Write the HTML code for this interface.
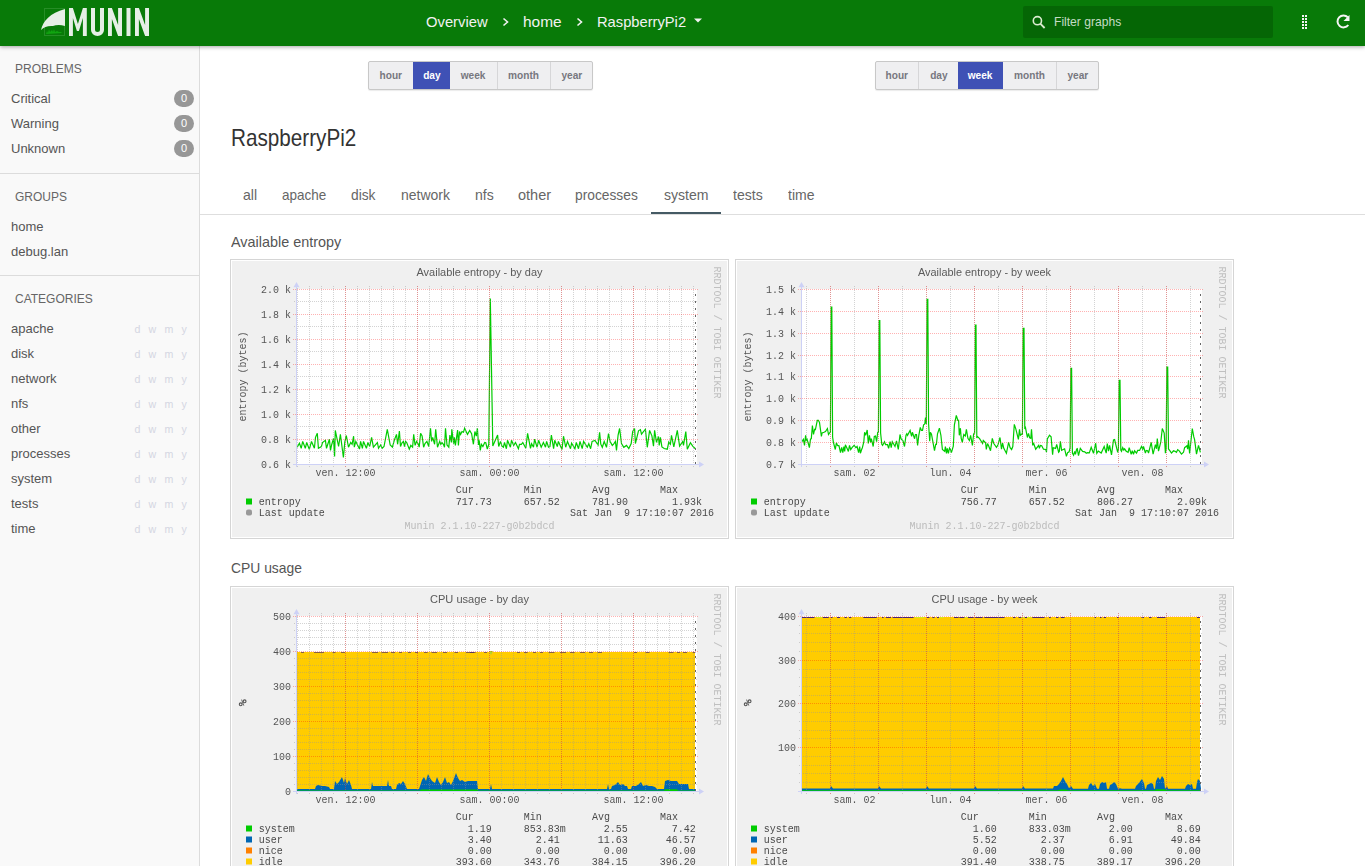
<!DOCTYPE html>
<html><head><meta charset="utf-8"><title>Munin :: RaspberryPi2</title>
<style>
*{margin:0;padding:0;box-sizing:border-box}
html,body{width:1365px;height:866px;overflow:hidden;background:#fff;font-family:"Liberation Sans",sans-serif}
.abs{position:absolute;white-space:nowrap}
#hdr{position:absolute;left:0;top:0;width:1365px;height:46px;background:#087a08;box-shadow:0 1px 4px rgba(0,0,0,.35);z-index:5}
#side{position:absolute;left:0;top:46px;width:200px;height:820px;background:#f9f9f9;border-right:1px solid #dcdcdc}
.sh{position:absolute;left:15px;font-size:12px;color:#666;letter-spacing:0}
.si{position:absolute;left:11px;font-size:13px;color:#555}
.badge{position:absolute;left:174px;width:20px;height:17px;border-radius:9px;background:#979797;color:#fff;font-size:11px;text-align:center;line-height:17px}
.hr{position:absolute;left:0;width:200px;height:1px;background:#dcdcdc}
.dwmy{position:absolute;margin-left:-1.5px;font-size:10.6px;margin-top:-0.5px;color:#d4d6e2}
.btng{position:absolute;top:61px;height:29px;border:1px solid #c8c8c8;border-radius:2px;background:#efeff1;box-shadow:0 1px 1px rgba(0,0,0,.08)}
.btn{position:absolute;top:0;height:27px;line-height:27px;font-size:11.5px;font-weight:bold;color:#77777f;text-align:center}
.btn.b{border-left:1px solid #d6d6d8}
.btn.act{background:#3f51b5;color:#fff}
.btn span{display:inline-block;transform:scaleX(.88)}
.tab{position:absolute;top:187px;transform-origin:0 0;font-size:14.5px;color:#666}
.gbox{position:absolute;will-change:transform}
</style></head><body>
<div id="hdr">
  <svg class="abs" style="left:40px;top:7px" width="112" height="32" viewBox="0 0 112 32">
    <rect x="4.5" y="1.5" width="20" height="27" fill="none" stroke="#3a9a3a" stroke-width="1" opacity=".6"/>
    <path d="M1,23 C3,14 10,6 25,2 L25,19 C20,17.5 16,18 13,19 C8,18.5 4,20 1,23 Z" fill="#e6efe6"/>
    <path d="M6,27 l1,-3 l1,2 l1,-4 l1,3 l2,-2 l1,2 l1,-3 l1,3 l2,-1 l2,1 l2,0 l1,1 Z" fill="#13b013" opacity=".8"/>
    <g fill="#e6efe6">
      <path d="M29,1 h3.9 l5,16 l5,-16 h3.9 v28 h-3.9 v-18 l-4,13 h-2 l-4,-13 v18 h-3.9 Z"/>
      <path d="M51,1 h4 v21.5 a2.5,2.5 0 0 0 5,0 v-21.5 h4 v22 a6.5,6 0 0 1 -13,0 Z"/>
      <path d="M68,1 h3.9 l6.2,17 v-17 h3.9 v28 h-3.9 l-6.2,-17 v17 h-3.9 Z"/>
      <rect x="86.5" y="1" width="4" height="28"/>
      <path d="M95,1 h3.9 l6.2,17 v-17 h3.9 v28 h-3.9 l-6.2,-17 v17 h-3.9 Z"/>
    </g>
  </svg>
  <div class="abs" style="left:426px;top:13px;font-size:15px;color:#f2f2f2;transform:scaleX(.985);transform-origin:0 0">Overview</div>
  <svg class="abs" style="left:502px;top:17px" width="8" height="10"><path d="M1.5,1.5 L5.5,5 L1.5,8.5" fill="none" stroke="#f2f2f2" stroke-width="1.6"/></svg>
  <div class="abs" style="left:523px;top:13px;font-size:15px;color:#f2f2f2;transform:scaleX(1.03);transform-origin:0 0">home</div>
  <svg class="abs" style="left:576px;top:17px" width="8" height="10"><path d="M1.5,1.5 L5.5,5 L1.5,8.5" fill="none" stroke="#f2f2f2" stroke-width="1.6"/></svg>
  <div class="abs" style="left:597px;top:13px;font-size:15px;color:#f2f2f2;transform:scaleX(.98);transform-origin:0 0">RaspberryPi2</div>
  <svg class="abs" style="left:693px;top:18px" width="10" height="6"><path d="M1,0.5 L9,0.5 L5,4.5 Z" fill="#f2f2f2"/></svg>
  <div class="abs" style="left:1023px;top:6px;width:250px;height:32px;background:#056605;border-radius:2px"></div>
  <svg class="abs" style="left:1030px;top:14px" width="18" height="18"><circle cx="7.4" cy="6.7" r="4.1" fill="none" stroke="#dcebd0" stroke-width="1.6"/><path d="M10.3,9.7 L14.6,14" stroke="#dcebd0" stroke-width="1.8" stroke-linecap="butt"/></svg>
  <div class="abs" style="left:1054px;top:14px;font-size:13px;color:#c4dcc4;transform:scaleX(.93);transform-origin:0 0">Filter graphs</div>
  <svg class="abs" style="left:1300px;top:13px" width="10" height="18" fill="#f5f5f5">
    <rect x="2" y="2" width="2" height="2"/><rect x="5" y="2" width="2" height="2"/>
    <rect x="2" y="5" width="2" height="2"/><rect x="5" y="5" width="2" height="2"/>
    <rect x="2" y="8" width="2" height="2"/><rect x="5" y="8" width="2" height="2"/>
    <rect x="2" y="11" width="2" height="2"/><rect x="5" y="11" width="2" height="2"/>
    <rect x="2" y="14" width="2" height="2"/><rect x="5" y="14" width="2" height="2"/>
  </svg>
  <svg class="abs" style="left:1333px;top:12px" width="20" height="20"><path d="M14.8,5.2 A6,6 0 1 0 15.3,13" fill="none" stroke="#f5f5f5" stroke-width="2"/><path d="M16.5,3 L16.5,9 L10.5,9 Z" fill="#f5f5f5"/></svg>
</div>

<div id="side">
  <div class="sh" style="top:16px">PROBLEMS</div>
  <div class="si" style="top:45px">Critical</div><div class="badge" style="top:44px">0</div>
  <div class="si" style="top:70px">Warning</div><div class="badge" style="top:69px">0</div>
  <div class="si" style="top:95px">Unknown</div><div class="badge" style="top:94px">0</div>
  <div class="hr" style="top:127px"></div>
  <div class="sh" style="top:144px">GROUPS</div>
  <div class="si" style="top:173px">home</div>
  <div class="si" style="top:198px">debug.lan</div>
  <div class="hr" style="top:229px"></div>
  <div class="sh" style="top:246px">CATEGORIES</div>
  <div class="si" style="top:275px">apache</div><div class="dwmy" style="left:136px;top:277px">d</div><div class="dwmy" style="left:150px;top:277px">w</div><div class="dwmy" style="left:166px;top:277px">m</div><div class="dwmy" style="left:183px;top:277px">y</div><div class="si" style="top:300px">disk</div><div class="dwmy" style="left:136px;top:302px">d</div><div class="dwmy" style="left:150px;top:302px">w</div><div class="dwmy" style="left:166px;top:302px">m</div><div class="dwmy" style="left:183px;top:302px">y</div><div class="si" style="top:325px">network</div><div class="dwmy" style="left:136px;top:327px">d</div><div class="dwmy" style="left:150px;top:327px">w</div><div class="dwmy" style="left:166px;top:327px">m</div><div class="dwmy" style="left:183px;top:327px">y</div><div class="si" style="top:350px">nfs</div><div class="dwmy" style="left:136px;top:352px">d</div><div class="dwmy" style="left:150px;top:352px">w</div><div class="dwmy" style="left:166px;top:352px">m</div><div class="dwmy" style="left:183px;top:352px">y</div><div class="si" style="top:375px">other</div><div class="dwmy" style="left:136px;top:377px">d</div><div class="dwmy" style="left:150px;top:377px">w</div><div class="dwmy" style="left:166px;top:377px">m</div><div class="dwmy" style="left:183px;top:377px">y</div><div class="si" style="top:400px">processes</div><div class="dwmy" style="left:136px;top:402px">d</div><div class="dwmy" style="left:150px;top:402px">w</div><div class="dwmy" style="left:166px;top:402px">m</div><div class="dwmy" style="left:183px;top:402px">y</div><div class="si" style="top:425px">system</div><div class="dwmy" style="left:136px;top:427px">d</div><div class="dwmy" style="left:150px;top:427px">w</div><div class="dwmy" style="left:166px;top:427px">m</div><div class="dwmy" style="left:183px;top:427px">y</div><div class="si" style="top:450px">tests</div><div class="dwmy" style="left:136px;top:452px">d</div><div class="dwmy" style="left:150px;top:452px">w</div><div class="dwmy" style="left:166px;top:452px">m</div><div class="dwmy" style="left:183px;top:452px">y</div><div class="si" style="top:475px">time</div><div class="dwmy" style="left:136px;top:477px">d</div><div class="dwmy" style="left:150px;top:477px">w</div><div class="dwmy" style="left:166px;top:477px">m</div><div class="dwmy" style="left:183px;top:477px">y</div>
</div>

<div class="btng" style="left:368px;width:225px">
  <div class="btn" style="left:0;width:44px"><span>hour</span></div>
  <div class="btn act" style="left:44px;width:37px"><span>day</span></div>
  <div class="btn" style="left:81px;width:47px"><span>week</span></div>
  <div class="btn b" style="left:128px;width:53px"><span>month</span></div>
  <div class="btn b" style="left:181px;width:42px"><span>year</span></div>
</div>
<div class="btng" style="left:875px;width:224px">
  <div class="btn" style="left:0;width:42px"><span>hour</span></div>
  <div class="btn b" style="left:42px;width:40px"><span>day</span></div>
  <div class="btn act" style="left:82px;width:45px"><span>week</span></div>
  <div class="btn" style="left:127px;width:53px"><span>month</span></div>
  <div class="btn b" style="left:180px;width:42px"><span>year</span></div>
</div>

<div class="abs" style="left:231px;top:124px;font-size:24px;color:#333;transform:scaleX(.862);transform-origin:0 0">RaspberryPi2</div>

<div class="tab" style="left:243px;transform:scaleX(0.97)">all</div>
<div class="tab" style="left:282px;transform:scaleX(0.93)">apache</div>
<div class="tab" style="left:351px;transform:scaleX(0.95)">disk</div>
<div class="tab" style="left:401px;transform:scaleX(0.965)">network</div>
<div class="tab" style="left:475px;transform:scaleX(0.97)">nfs</div>
<div class="tab" style="left:518px;transform:scaleX(1)">other</div>
<div class="tab" style="left:575px;transform:scaleX(0.95)">processes</div>
<div class="tab" style="left:664px;transform:scaleX(0.97)">system</div>
<div class="tab" style="left:733px;transform:scaleX(0.97)">tests</div>
<div class="tab" style="left:788px;transform:scaleX(0.967)">time</div>
<div class="abs" style="left:651px;top:212px;width:70px;height:2px;background:#455a64"></div>
<div class="abs" style="left:200px;top:214px;width:1165px;height:1px;background:#dedede"></div>

<div class="abs" style="left:231px;top:233px;font-size:15px;color:#555;transform:scaleX(.96);transform-origin:0 0">Available entropy</div>
<div class="gbox" style="left:230px;top:259px"><svg width="499" height="280" viewBox="0 0 499 280" style="display:block" font-family='"Liberation Mono", monospace'><rect x="0" y="0" width="499" height="280" fill="#d5d5d5"/><rect x="1" y="1" width="497" height="278" fill="#fff"/><rect x="2" y="2" width="495" height="276" fill="#f0f0f0"/><rect x="67" y="30" width="400" height="175" fill="#fff"/><polyline points="67.2,188.2 69.4,184.2 71.2,189.3 72.7,182.4 75.3,189.3 76.7,183.5 79.3,190.4 81.5,182.4 84.4,189.3 85.5,178.3 87.3,174.3 88.4,189.3 91.4,187.5 92.5,183.5 95.4,181.3 96.5,189.3 99.4,180.2 100.5,191.5 101.6,186.0 103.5,179.4 104.6,197.4 105.3,171.4 108.6,187.5 110.4,175.4 113.4,198.5 114.8,183.1 116.3,176.5 118.5,188.2 120.7,183.5 122.1,185.3 123.6,177.2 124.3,188.2 125.8,182.4 129.5,190.1 130.6,182.4 132.4,189.3 133.5,182.4 136.4,189.3 137.9,183.5 139.7,187.5 141.6,178.3 143.4,188.2 147.4,183.5 148.5,189.3 150.7,186.0 152.2,189.3 154.0,187.5 157.3,170.3 160.2,186.0 162.4,188.2 164.3,181.3 166.5,175.4 167.6,185.3 169.4,172.1 170.5,187.5 172.0,183.8 173.4,182.4 174.5,187.5 175.6,182.4 176.7,183.5 179.3,190.1 180.8,186.4 182.6,188.2 183.7,175.4 185.1,186.4 186.6,182.4 188.4,185.3 189.2,188.2 190.6,174.3 192.1,176.9 193.6,188.2 195.0,184.6 196.9,182.4 198.7,187.5 200.5,169.2 201.6,182.4 202.7,178.3 204.6,185.3 205.7,170.3 207.5,188.2 209.7,182.4 210.8,185.3 211.9,183.5 213.4,185.3 214.5,188.2 215.5,169.2 217.0,186.0 218.8,188.2 219.9,176.1 221.4,183.5 221.8,170.3 223.6,184.6 224.3,178.3 225.4,186.4 227.6,171.0 228.4,186.4 229.5,172.5 230.6,175.4 232.0,172.5 233.5,173.2 234.6,169.2 237.5,175.4 239.7,171.4 241.6,174.7 243.4,185.3 244.9,172.5 246.3,177.2 247.4,169.2 248.5,186.0 249.2,181.3 250.3,191.5 251.4,185.3 252.9,187.5 254.7,183.5 255.8,183.8 257.3,190.1 258.8,185.3 260.3,39.5 262.8,187.0 267.6,176.1 268.7,187.5 270.5,182.4 272.0,187.1 273.4,188.2 274.5,183.5 276.4,189.7 277.5,181.3 280.4,188.2 281.5,181.3 283.7,186.4 285.5,183.5 288.4,189.7 289.5,185.3 291.4,185.3 292.8,183.5 295.8,189.3 297.6,174.3 300.5,189.3 301.6,184.6 303.5,188.2 304.6,180.2 307.1,188.2 308.6,181.3 311.2,188.2 313.4,183.5 315.5,188.2 316.6,182.4 318.5,188.2 319.9,187.5 321.4,176.1 323.6,189.7 324.7,181.3 327.3,187.5 328.4,182.4 332.0,190.4 333.5,177.2 335.7,188.2 337.5,182.4 340.5,189.7 341.6,184.2 344.9,189.7 346.3,183.5 348.5,189.7 350.0,182.4 352.2,189.7 353.6,182.4 357.3,188.2 358.8,184.6 360.6,189.7 362.1,182.4 365.0,181.4 368.1,186.0 369.6,173.3 370.8,185.2 372.3,188.3 374.2,182.5 376.5,188.3 378.5,174.5 380.0,182.2 382.3,186.4 383.8,184.8 385.4,182.5 386.5,191.4 388.1,176.0 389.6,169.5 391.5,184.5 393.8,188.3 396.5,186.4 398.8,189.5 401.2,184.5 402.7,172.5 404.6,169.5 405.4,184.5 408.5,171.8 410.4,170.6 411.5,175.2 415.4,170.2 417.3,188.3 419.6,171.4 421.9,176.8 423.5,187.2 424.6,171.4 426.5,183.3 428.5,177.5 429.2,186.4 430.4,178.3 431.9,187.9 434.2,189.5 437.3,190.2 438.8,182.9 440.4,185.2 441.5,176.4 443.8,187.9 447.3,171.4 449.6,187.2 452.7,182.5 453.5,186.4 455.8,172.5 457.3,190.2 460.4,183.7 462.7,187.2 465.4,189.8" fill="none" stroke="#00cc00" stroke-width="1.2" stroke-linejoin="miter" stroke-miterlimit="3"/><line x1="64" y1="192.5" x2="467" y2="192.5" stroke="rgba(150,150,150,0.42)" stroke-dasharray="1,1"/><line x1="64" y1="167.5" x2="467" y2="167.5" stroke="rgba(150,150,150,0.42)" stroke-dasharray="1,1"/><line x1="64" y1="142.5" x2="467" y2="142.5" stroke="rgba(150,150,150,0.42)" stroke-dasharray="1,1"/><line x1="64" y1="117.5" x2="467" y2="117.5" stroke="rgba(150,150,150,0.42)" stroke-dasharray="1,1"/><line x1="64" y1="92.5" x2="467" y2="92.5" stroke="rgba(150,150,150,0.42)" stroke-dasharray="1,1"/><line x1="64" y1="67.5" x2="467" y2="67.5" stroke="rgba(150,150,150,0.42)" stroke-dasharray="1,1"/><line x1="64" y1="42.5" x2="467" y2="42.5" stroke="rgba(150,150,150,0.42)" stroke-dasharray="1,1"/><line x1="67.5" y1="27" x2="67.5" y2="208" stroke="rgba(150,150,150,0.42)" stroke-dasharray="1,1"/><line x1="79.5" y1="27" x2="79.5" y2="208" stroke="rgba(150,150,150,0.42)" stroke-dasharray="1,1"/><line x1="91.5" y1="27" x2="91.5" y2="208" stroke="rgba(150,150,150,0.42)" stroke-dasharray="1,1"/><line x1="103.5" y1="27" x2="103.5" y2="208" stroke="rgba(150,150,150,0.42)" stroke-dasharray="1,1"/><line x1="115.5" y1="27" x2="115.5" y2="208" stroke="rgba(150,150,150,0.42)" stroke-dasharray="1,1"/><line x1="127.5" y1="27" x2="127.5" y2="208" stroke="rgba(150,150,150,0.42)" stroke-dasharray="1,1"/><line x1="139.5" y1="27" x2="139.5" y2="208" stroke="rgba(150,150,150,0.42)" stroke-dasharray="1,1"/><line x1="151.5" y1="27" x2="151.5" y2="208" stroke="rgba(150,150,150,0.42)" stroke-dasharray="1,1"/><line x1="163.5" y1="27" x2="163.5" y2="208" stroke="rgba(150,150,150,0.42)" stroke-dasharray="1,1"/><line x1="175.5" y1="27" x2="175.5" y2="208" stroke="rgba(150,150,150,0.42)" stroke-dasharray="1,1"/><line x1="187.5" y1="27" x2="187.5" y2="208" stroke="rgba(150,150,150,0.42)" stroke-dasharray="1,1"/><line x1="199.5" y1="27" x2="199.5" y2="208" stroke="rgba(150,150,150,0.42)" stroke-dasharray="1,1"/><line x1="211.5" y1="27" x2="211.5" y2="208" stroke="rgba(150,150,150,0.42)" stroke-dasharray="1,1"/><line x1="223.5" y1="27" x2="223.5" y2="208" stroke="rgba(150,150,150,0.42)" stroke-dasharray="1,1"/><line x1="235.5" y1="27" x2="235.5" y2="208" stroke="rgba(150,150,150,0.42)" stroke-dasharray="1,1"/><line x1="247.5" y1="27" x2="247.5" y2="208" stroke="rgba(150,150,150,0.42)" stroke-dasharray="1,1"/><line x1="259.5" y1="27" x2="259.5" y2="208" stroke="rgba(150,150,150,0.42)" stroke-dasharray="1,1"/><line x1="271.5" y1="27" x2="271.5" y2="208" stroke="rgba(150,150,150,0.42)" stroke-dasharray="1,1"/><line x1="283.5" y1="27" x2="283.5" y2="208" stroke="rgba(150,150,150,0.42)" stroke-dasharray="1,1"/><line x1="295.5" y1="27" x2="295.5" y2="208" stroke="rgba(150,150,150,0.42)" stroke-dasharray="1,1"/><line x1="307.5" y1="27" x2="307.5" y2="208" stroke="rgba(150,150,150,0.42)" stroke-dasharray="1,1"/><line x1="319.5" y1="27" x2="319.5" y2="208" stroke="rgba(150,150,150,0.42)" stroke-dasharray="1,1"/><line x1="331.5" y1="27" x2="331.5" y2="208" stroke="rgba(150,150,150,0.42)" stroke-dasharray="1,1"/><line x1="343.5" y1="27" x2="343.5" y2="208" stroke="rgba(150,150,150,0.42)" stroke-dasharray="1,1"/><line x1="355.5" y1="27" x2="355.5" y2="208" stroke="rgba(150,150,150,0.42)" stroke-dasharray="1,1"/><line x1="367.5" y1="27" x2="367.5" y2="208" stroke="rgba(150,150,150,0.42)" stroke-dasharray="1,1"/><line x1="379.5" y1="27" x2="379.5" y2="208" stroke="rgba(150,150,150,0.42)" stroke-dasharray="1,1"/><line x1="391.5" y1="27" x2="391.5" y2="208" stroke="rgba(150,150,150,0.42)" stroke-dasharray="1,1"/><line x1="403.5" y1="27" x2="403.5" y2="208" stroke="rgba(150,150,150,0.42)" stroke-dasharray="1,1"/><line x1="415.5" y1="27" x2="415.5" y2="208" stroke="rgba(150,150,150,0.42)" stroke-dasharray="1,1"/><line x1="427.5" y1="27" x2="427.5" y2="208" stroke="rgba(150,150,150,0.42)" stroke-dasharray="1,1"/><line x1="439.5" y1="27" x2="439.5" y2="208" stroke="rgba(150,150,150,0.42)" stroke-dasharray="1,1"/><line x1="451.5" y1="27" x2="451.5" y2="208" stroke="rgba(150,150,150,0.42)" stroke-dasharray="1,1"/><line x1="463.5" y1="27" x2="463.5" y2="208" stroke="rgba(150,150,150,0.42)" stroke-dasharray="1,1"/><line x1="115.5" y1="27" x2="115.5" y2="209" stroke="rgba(255,0,0,0.3)" stroke-dasharray="1,1"/><line x1="187.5" y1="27" x2="187.5" y2="209" stroke="rgba(255,0,0,0.3)" stroke-dasharray="1,1"/><line x1="259.5" y1="27" x2="259.5" y2="209" stroke="rgba(255,0,0,0.3)" stroke-dasharray="1,1"/><line x1="331.5" y1="27" x2="331.5" y2="209" stroke="rgba(255,0,0,0.3)" stroke-dasharray="1,1"/><line x1="403.5" y1="27" x2="403.5" y2="209" stroke="rgba(255,0,0,0.3)" stroke-dasharray="1,1"/><line x1="63" y1="205.5" x2="469" y2="205.5" stroke="rgba(255,0,0,0.3)" stroke-dasharray="1,1"/><line x1="63" y1="180.5" x2="469" y2="180.5" stroke="rgba(255,0,0,0.3)" stroke-dasharray="1,1"/><line x1="63" y1="155.5" x2="469" y2="155.5" stroke="rgba(255,0,0,0.3)" stroke-dasharray="1,1"/><line x1="63" y1="130.5" x2="469" y2="130.5" stroke="rgba(255,0,0,0.3)" stroke-dasharray="1,1"/><line x1="63" y1="105.5" x2="469" y2="105.5" stroke="rgba(255,0,0,0.3)" stroke-dasharray="1,1"/><line x1="63" y1="80.5" x2="469" y2="80.5" stroke="rgba(255,0,0,0.3)" stroke-dasharray="1,1"/><line x1="63" y1="55.5" x2="469" y2="55.5" stroke="rgba(255,0,0,0.3)" stroke-dasharray="1,1"/><line x1="63" y1="30.5" x2="469" y2="30.5" stroke="rgba(255,0,0,0.3)" stroke-dasharray="1,1"/><line x1="465.5" y1="35" x2="465.5" y2="205" stroke="#666" stroke-dasharray="2,5" stroke-width="1"/><line x1="66.5" y1="27" x2="66.5" y2="208" stroke="#cdd1f6"/><line x1="63" y1="205.5" x2="470" y2="205.5" stroke="#cdd1f6"/><path d="M63.5,28.2 L66.5,23.1 L69.5,28.2 Z" fill="#cdd1f6"/><path d="M469,202.5 L474,205.5 L469,208.5 Z" fill="#cdd1f6"/><text x="61" y="209" text-anchor="end" fill="#555" font-size="10" textLength="30" lengthAdjust="spacingAndGlyphs"  xml:space="preserve">0.6 k</text><text x="61" y="184" text-anchor="end" fill="#555" font-size="10" textLength="30" lengthAdjust="spacingAndGlyphs"  xml:space="preserve">0.8 k</text><text x="61" y="159" text-anchor="end" fill="#555" font-size="10" textLength="30" lengthAdjust="spacingAndGlyphs"  xml:space="preserve">1.0 k</text><text x="61" y="134" text-anchor="end" fill="#555" font-size="10" textLength="30" lengthAdjust="spacingAndGlyphs"  xml:space="preserve">1.2 k</text><text x="61" y="109" text-anchor="end" fill="#555" font-size="10" textLength="30" lengthAdjust="spacingAndGlyphs"  xml:space="preserve">1.4 k</text><text x="61" y="84" text-anchor="end" fill="#555" font-size="10" textLength="30" lengthAdjust="spacingAndGlyphs"  xml:space="preserve">1.6 k</text><text x="61" y="59" text-anchor="end" fill="#555" font-size="10" textLength="30" lengthAdjust="spacingAndGlyphs"  xml:space="preserve">1.8 k</text><text x="61" y="34" text-anchor="end" fill="#555" font-size="10" textLength="30" lengthAdjust="spacingAndGlyphs"  xml:space="preserve">2.0 k</text><text x="115.5" y="217" text-anchor="middle" fill="#555" font-size="10" textLength="60" lengthAdjust="spacingAndGlyphs"  xml:space="preserve">ven. 12:00</text><text x="259.5" y="217" text-anchor="middle" fill="#555" font-size="10" textLength="60" lengthAdjust="spacingAndGlyphs"  xml:space="preserve">sam. 00:00</text><text x="403.5" y="217" text-anchor="middle" fill="#555" font-size="10" textLength="60" lengthAdjust="spacingAndGlyphs"  xml:space="preserve">sam. 12:00</text><text x="249.5" y="17" text-anchor="middle" fill="#5a5a5a" font-family='"Liberation Sans", sans-serif' font-size="10.6" textLength="126" lengthAdjust="spacingAndGlyphs">Available entropy - by day</text><text transform="translate(16,117.5) rotate(-90)" text-anchor="middle" fill="#555" font-size="10" textLength="90" lengthAdjust="spacingAndGlyphs" xml:space="preserve">entropy (bytes)</text><text transform="translate(483.5,7.5) rotate(90)" fill="#c0c0c0" font-size="10" textLength="132" lengthAdjust="spacingAndGlyphs" xml:space="preserve">RRDTOOL / TOBI OETIKER</text><text x="225.8" y="234" text-anchor="start" fill="#4a4a4a" font-size="10" textLength="18" lengthAdjust="spacingAndGlyphs"  xml:space="preserve">Cur</text><text x="293.7" y="234" text-anchor="start" fill="#4a4a4a" font-size="10" textLength="18" lengthAdjust="spacingAndGlyphs"  xml:space="preserve">Min</text><text x="361.9" y="234" text-anchor="start" fill="#4a4a4a" font-size="10" textLength="18" lengthAdjust="spacingAndGlyphs"  xml:space="preserve">Avg</text><text x="430" y="234" text-anchor="start" fill="#4a4a4a" font-size="10" textLength="18" lengthAdjust="spacingAndGlyphs"  xml:space="preserve">Max</text><rect x="16" y="239.5" width="6" height="6" fill="#00cc00"/><text x="28.7" y="246" text-anchor="start" fill="#4a4a4a" font-size="10" textLength="42" lengthAdjust="spacingAndGlyphs"  xml:space="preserve">entropy</text><text x="225.8" y="246" text-anchor="start" fill="#4a4a4a" font-size="10" textLength="36" lengthAdjust="spacingAndGlyphs"  xml:space="preserve">717.73</text><text x="293.7" y="246" text-anchor="start" fill="#4a4a4a" font-size="10" textLength="36" lengthAdjust="spacingAndGlyphs"  xml:space="preserve">657.52</text><text x="361.9" y="246" text-anchor="start" fill="#4a4a4a" font-size="10" textLength="36" lengthAdjust="spacingAndGlyphs"  xml:space="preserve">781.90</text><text x="430" y="246" text-anchor="start" fill="#4a4a4a" font-size="10" textLength="42" lengthAdjust="spacingAndGlyphs"  xml:space="preserve">  1.93k</text><rect x="16" y="250.5" width="6" height="6" rx="2" fill="#999"/><text x="28.7" y="257" text-anchor="start" fill="#4a4a4a" font-size="10" textLength="66" lengthAdjust="spacingAndGlyphs"  xml:space="preserve">Last update</text><text x="340" y="257" text-anchor="start" fill="#4a4a4a" font-size="10" textLength="144" lengthAdjust="spacingAndGlyphs"  xml:space="preserve">Sat Jan  9 17:10:07 2016</text><text x="249.5" y="270" text-anchor="middle" fill="#bbb" font-size="10" textLength="150" lengthAdjust="spacingAndGlyphs"  xml:space="preserve">Munin 2.1.10-227-g0b2bdcd</text></svg></div>
<div class="gbox" style="left:735px;top:259px"><svg width="499" height="280" viewBox="0 0 499 280" style="display:block" font-family='"Liberation Mono", monospace'><rect x="0" y="0" width="499" height="280" fill="#d5d5d5"/><rect x="1" y="1" width="497" height="278" fill="#fff"/><rect x="2" y="2" width="495" height="276" fill="#f0f0f0"/><rect x="67" y="30" width="400" height="175" fill="#fff"/><polyline points="66.9,182.7 68.4,180.4 69.5,186.4 70.6,176.3 71.4,181.9 72.1,180.4 73.3,184.5 74.4,188.7 75.5,180.0 76.3,179.7 77.4,166.5 78.5,175.5 79.6,170.3 80.4,170.7 82.3,161.3 83.4,161.3 84.5,163.5 86.4,177.4 87.1,174.0 89.0,173.3 90.5,172.5 92.4,169.5 93.5,175.5 95.0,173.3 95.4,173.0 96.2,48.0 96.8,48.0 97.6,178.0 98.4,183.4 100.3,190.5 101.4,183.8 102.5,186.4 104.0,186.8 105.5,193.6 106.7,188.3 107.8,193.6 108.9,187.5 109.7,192.4 110.4,185.7 111.9,189.0 113.4,192.4 114.5,186.4 115.7,190.5 117.2,188.3 119.1,186.4 120.9,188.7 122.1,187.5 123.6,193.6 124.7,187.5 125.4,194.3 126.9,189.8 127.3,189.0 128.8,183.0 129.6,173.3 130.7,176.3 132.2,171.0 133.3,184.5 134.4,176.3 135.6,183.4 136.3,179.7 138.2,187.5 139.3,177.4 140.5,177.0 141.6,182.7 142.7,173.3 143.4,173.0 144.2,61.5 144.8,61.5 145.6,174.0 146.8,185.3 147.6,186.4 149.5,182.7 150.6,185.7 152.5,185.7 153.6,189.4 155.1,182.7 156.2,188.7 157.3,182.7 160.0,187.5 161.5,181.9 163.3,190.5 165.0,175.5 166.1,180.0 168.0,181.9 169.5,187.5 171.0,176.3 171.8,174.8 172.5,176.3 175.1,171.4 176.6,177.4 177.4,173.3 179.6,179.7 180.4,175.5 181.5,175.5 182.6,186.4 183.8,176.3 185.3,168.4 186.4,171.4 187.5,171.4 188.6,165.8 189.8,165.0 190.5,158.6 191.3,165.0 192.1,40.3 192.8,40.3 193.6,165.0 194.7,182.3 195.4,173.3 196.5,175.2 199.5,191.7 200.7,185.3 201.4,185.3 202.5,174.8 204.4,169.2 205.9,176.3 207.4,190.5 209.7,192.4 210.4,187.5 211.5,194.3 212.3,189.4 213.4,194.3 214.5,189.0 215.3,190.2 216.4,193.6 218.3,187.2 219.4,165.8 221.3,156.4 222.8,161.3 223.6,161.3 224.3,176.3 225.4,169.2 226.2,179.3 227.3,183.4 228.8,175.5 230.3,177.0 231.4,170.3 232.9,179.3 234.4,181.5 235.6,176.3 237.4,186.4 238.6,175.2 239.3,174.0 239.6,174.0 240.4,66.0 241.0,66.0 241.8,179.0 242.3,177.4 244.6,179.7 247.6,184.5 248.3,181.5 250.6,183.8 251.3,190.5 252.5,184.5 253.6,186.8 255.5,191.7 257.3,179.3 258.8,184.5 261.5,188.3 263.0,185.7 265.0,178.5 266.5,190.2 267.6,184.2 268.8,189.4 271.4,194.3 273.6,183.4 275.1,188.7 276.6,190.5 277.8,187.5 279.3,165.4 280.8,169.9 283.4,180.4 284.5,170.3 285.3,176.3 287.1,174.8 287.4,175.0 288.2,69.3 289.0,69.3 289.8,170.0 290.5,168.8 292.4,178.5 293.5,174.4 294.7,178.9 295.8,179.3 296.5,170.3 297.7,186.4 298.4,183.8 300.7,190.2 303.7,186.4 304.4,189.4 305.5,186.4 306.7,186.8 308.5,190.2 310.8,190.5 311.5,193.2 312.3,180.0 314.5,176.3 316.1,177.8 317.6,195.8 318.3,188.7 320.6,189.4 321.7,185.3 323.6,193.2 324.3,192.4 325.4,182.3 326.6,191.3 329.6,189.8 331.4,197.3 332.6,193.6 334.1,192.8 335.0,189.0 335.1,189.0 335.9,109.3 336.6,109.3 337.4,194.0 338.6,196.2 339.7,192.4 340.5,195.4 341.6,190.2 342.3,189.8 343.5,196.6 345.3,189.4 347.6,192.4 349.8,192.8 351.3,194.3 352.5,193.6 354.3,193.9 356.2,188.3 358.5,194.3 360.7,184.2 361.8,194.3 363.3,192.1 366.2,194.1 369.2,187.5 371.2,194.1 372.3,184.5 373.5,192.2 374.6,186.4 376.5,196.0 378.5,181.0 379.6,180.6 382.7,193.3 383.3,190.2 383.4,190.0 384.2,121.3 385.0,121.3 385.8,191.0 386.5,192.2 387.7,188.7 388.8,191.0 389.6,189.8 391.2,192.2 393.1,193.3 394.2,188.7 396.2,195.2 397.3,191.8 398.5,195.2 399.6,191.8 401.5,194.1 402.7,191.4 404.6,191.4 406.5,187.5 407.7,190.2 408.5,187.5 410.4,194.1 411.2,191.4 412.7,191.8 413.5,194.1 416.2,183.3 418.1,195.2 420.4,185.6 421.5,189.8 422.3,179.5 423.5,192.2 425.8,182.9 427.3,169.5 429.2,174.1 430.4,194.1 431.0,190.2 431.1,190.0 431.9,108.2 432.7,108.2 433.5,190.0 435.0,191.8 436.5,194.1 438.5,191.8 440.0,192.2 441.5,193.3 442.7,190.6 444.2,191.8 446.5,195.2 448.5,193.3 449.6,188.7 451.9,186.8 452.7,190.2 453.5,181.4 454.6,194.5 457.3,169.5 458.8,177.9 459.6,180.6 461.5,195.2 463.5,186.4 465.4,193.3" fill="none" stroke="#00cc00" stroke-width="1.2" stroke-linejoin="miter" stroke-miterlimit="3"/><line x1="71.5" y1="27" x2="71.5" y2="208" stroke="rgba(150,150,150,0.42)" stroke-dasharray="1,1"/><line x1="95.5" y1="27" x2="95.5" y2="208" stroke="rgba(150,150,150,0.42)" stroke-dasharray="1,1"/><line x1="119.5" y1="27" x2="119.5" y2="208" stroke="rgba(150,150,150,0.42)" stroke-dasharray="1,1"/><line x1="143.5" y1="27" x2="143.5" y2="208" stroke="rgba(150,150,150,0.42)" stroke-dasharray="1,1"/><line x1="167.5" y1="27" x2="167.5" y2="208" stroke="rgba(150,150,150,0.42)" stroke-dasharray="1,1"/><line x1="191.5" y1="27" x2="191.5" y2="208" stroke="rgba(150,150,150,0.42)" stroke-dasharray="1,1"/><line x1="215.5" y1="27" x2="215.5" y2="208" stroke="rgba(150,150,150,0.42)" stroke-dasharray="1,1"/><line x1="239.5" y1="27" x2="239.5" y2="208" stroke="rgba(150,150,150,0.42)" stroke-dasharray="1,1"/><line x1="263.5" y1="27" x2="263.5" y2="208" stroke="rgba(150,150,150,0.42)" stroke-dasharray="1,1"/><line x1="287.5" y1="27" x2="287.5" y2="208" stroke="rgba(150,150,150,0.42)" stroke-dasharray="1,1"/><line x1="311.5" y1="27" x2="311.5" y2="208" stroke="rgba(150,150,150,0.42)" stroke-dasharray="1,1"/><line x1="335.5" y1="27" x2="335.5" y2="208" stroke="rgba(150,150,150,0.42)" stroke-dasharray="1,1"/><line x1="359.5" y1="27" x2="359.5" y2="208" stroke="rgba(150,150,150,0.42)" stroke-dasharray="1,1"/><line x1="383.5" y1="27" x2="383.5" y2="208" stroke="rgba(150,150,150,0.42)" stroke-dasharray="1,1"/><line x1="407.5" y1="27" x2="407.5" y2="208" stroke="rgba(150,150,150,0.42)" stroke-dasharray="1,1"/><line x1="431.5" y1="27" x2="431.5" y2="208" stroke="rgba(150,150,150,0.42)" stroke-dasharray="1,1"/><line x1="455.5" y1="27" x2="455.5" y2="208" stroke="rgba(150,150,150,0.42)" stroke-dasharray="1,1"/><line x1="95.5" y1="27" x2="95.5" y2="209" stroke="rgba(255,0,0,0.3)" stroke-dasharray="1,1"/><line x1="143.5" y1="27" x2="143.5" y2="209" stroke="rgba(255,0,0,0.3)" stroke-dasharray="1,1"/><line x1="191.5" y1="27" x2="191.5" y2="209" stroke="rgba(255,0,0,0.3)" stroke-dasharray="1,1"/><line x1="239.5" y1="27" x2="239.5" y2="209" stroke="rgba(255,0,0,0.3)" stroke-dasharray="1,1"/><line x1="287.5" y1="27" x2="287.5" y2="209" stroke="rgba(255,0,0,0.3)" stroke-dasharray="1,1"/><line x1="335.5" y1="27" x2="335.5" y2="209" stroke="rgba(255,0,0,0.3)" stroke-dasharray="1,1"/><line x1="383.5" y1="27" x2="383.5" y2="209" stroke="rgba(255,0,0,0.3)" stroke-dasharray="1,1"/><line x1="431.5" y1="27" x2="431.5" y2="209" stroke="rgba(255,0,0,0.3)" stroke-dasharray="1,1"/><line x1="63" y1="205.5" x2="469" y2="205.5" stroke="rgba(255,0,0,0.3)" stroke-dasharray="1,1"/><line x1="63" y1="183.5" x2="469" y2="183.5" stroke="rgba(255,0,0,0.3)" stroke-dasharray="1,1"/><line x1="63" y1="161.5" x2="469" y2="161.5" stroke="rgba(255,0,0,0.3)" stroke-dasharray="1,1"/><line x1="63" y1="139.5" x2="469" y2="139.5" stroke="rgba(255,0,0,0.3)" stroke-dasharray="1,1"/><line x1="63" y1="117.5" x2="469" y2="117.5" stroke="rgba(255,0,0,0.3)" stroke-dasharray="1,1"/><line x1="63" y1="96.5" x2="469" y2="96.5" stroke="rgba(255,0,0,0.3)" stroke-dasharray="1,1"/><line x1="63" y1="74.5" x2="469" y2="74.5" stroke="rgba(255,0,0,0.3)" stroke-dasharray="1,1"/><line x1="63" y1="52.5" x2="469" y2="52.5" stroke="rgba(255,0,0,0.3)" stroke-dasharray="1,1"/><line x1="63" y1="30.5" x2="469" y2="30.5" stroke="rgba(255,0,0,0.3)" stroke-dasharray="1,1"/><line x1="465.5" y1="35" x2="465.5" y2="205" stroke="#666" stroke-dasharray="2,5" stroke-width="1"/><line x1="66.5" y1="27" x2="66.5" y2="208" stroke="#cdd1f6"/><line x1="63" y1="205.5" x2="470" y2="205.5" stroke="#cdd1f6"/><path d="M63.5,28.2 L66.5,23.1 L69.5,28.2 Z" fill="#cdd1f6"/><path d="M469,202.5 L474,205.5 L469,208.5 Z" fill="#cdd1f6"/><text x="61" y="209" text-anchor="end" fill="#555" font-size="10" textLength="30" lengthAdjust="spacingAndGlyphs"  xml:space="preserve">0.7 k</text><text x="61" y="187" text-anchor="end" fill="#555" font-size="10" textLength="30" lengthAdjust="spacingAndGlyphs"  xml:space="preserve">0.8 k</text><text x="61" y="165" text-anchor="end" fill="#555" font-size="10" textLength="30" lengthAdjust="spacingAndGlyphs"  xml:space="preserve">0.9 k</text><text x="61" y="143" text-anchor="end" fill="#555" font-size="10" textLength="30" lengthAdjust="spacingAndGlyphs"  xml:space="preserve">1.0 k</text><text x="61" y="121" text-anchor="end" fill="#555" font-size="10" textLength="30" lengthAdjust="spacingAndGlyphs"  xml:space="preserve">1.1 k</text><text x="61" y="100" text-anchor="end" fill="#555" font-size="10" textLength="30" lengthAdjust="spacingAndGlyphs"  xml:space="preserve">1.2 k</text><text x="61" y="78" text-anchor="end" fill="#555" font-size="10" textLength="30" lengthAdjust="spacingAndGlyphs"  xml:space="preserve">1.3 k</text><text x="61" y="56" text-anchor="end" fill="#555" font-size="10" textLength="30" lengthAdjust="spacingAndGlyphs"  xml:space="preserve">1.4 k</text><text x="61" y="34" text-anchor="end" fill="#555" font-size="10" textLength="30" lengthAdjust="spacingAndGlyphs"  xml:space="preserve">1.5 k</text><text x="119.5" y="217" text-anchor="middle" fill="#555" font-size="10" textLength="42" lengthAdjust="spacingAndGlyphs"  xml:space="preserve">sam. 02</text><text x="215.5" y="217" text-anchor="middle" fill="#555" font-size="10" textLength="42" lengthAdjust="spacingAndGlyphs"  xml:space="preserve">lun. 04</text><text x="311.5" y="217" text-anchor="middle" fill="#555" font-size="10" textLength="42" lengthAdjust="spacingAndGlyphs"  xml:space="preserve">mer. 06</text><text x="407.5" y="217" text-anchor="middle" fill="#555" font-size="10" textLength="42" lengthAdjust="spacingAndGlyphs"  xml:space="preserve">ven. 08</text><text x="249.5" y="17" text-anchor="middle" fill="#5a5a5a" font-family='"Liberation Sans", sans-serif' font-size="10.6" textLength="133" lengthAdjust="spacingAndGlyphs">Available entropy - by week</text><text transform="translate(16,117.5) rotate(-90)" text-anchor="middle" fill="#555" font-size="10" textLength="90" lengthAdjust="spacingAndGlyphs" xml:space="preserve">entropy (bytes)</text><text transform="translate(483.5,7.5) rotate(90)" fill="#c0c0c0" font-size="10" textLength="132" lengthAdjust="spacingAndGlyphs" xml:space="preserve">RRDTOOL / TOBI OETIKER</text><text x="225.8" y="234" text-anchor="start" fill="#4a4a4a" font-size="10" textLength="18" lengthAdjust="spacingAndGlyphs"  xml:space="preserve">Cur</text><text x="293.7" y="234" text-anchor="start" fill="#4a4a4a" font-size="10" textLength="18" lengthAdjust="spacingAndGlyphs"  xml:space="preserve">Min</text><text x="361.9" y="234" text-anchor="start" fill="#4a4a4a" font-size="10" textLength="18" lengthAdjust="spacingAndGlyphs"  xml:space="preserve">Avg</text><text x="430" y="234" text-anchor="start" fill="#4a4a4a" font-size="10" textLength="18" lengthAdjust="spacingAndGlyphs"  xml:space="preserve">Max</text><rect x="16" y="239.5" width="6" height="6" fill="#00cc00"/><text x="28.7" y="246" text-anchor="start" fill="#4a4a4a" font-size="10" textLength="42" lengthAdjust="spacingAndGlyphs"  xml:space="preserve">entropy</text><text x="225.8" y="246" text-anchor="start" fill="#4a4a4a" font-size="10" textLength="36" lengthAdjust="spacingAndGlyphs"  xml:space="preserve">756.77</text><text x="293.7" y="246" text-anchor="start" fill="#4a4a4a" font-size="10" textLength="36" lengthAdjust="spacingAndGlyphs"  xml:space="preserve">657.52</text><text x="361.9" y="246" text-anchor="start" fill="#4a4a4a" font-size="10" textLength="36" lengthAdjust="spacingAndGlyphs"  xml:space="preserve">806.27</text><text x="430" y="246" text-anchor="start" fill="#4a4a4a" font-size="10" textLength="42" lengthAdjust="spacingAndGlyphs"  xml:space="preserve">  2.09k</text><rect x="16" y="250.5" width="6" height="6" rx="2" fill="#999"/><text x="28.7" y="257" text-anchor="start" fill="#4a4a4a" font-size="10" textLength="66" lengthAdjust="spacingAndGlyphs"  xml:space="preserve">Last update</text><text x="340" y="257" text-anchor="start" fill="#4a4a4a" font-size="10" textLength="144" lengthAdjust="spacingAndGlyphs"  xml:space="preserve">Sat Jan  9 17:10:07 2016</text><text x="249.5" y="270" text-anchor="middle" fill="#bbb" font-size="10" textLength="150" lengthAdjust="spacingAndGlyphs"  xml:space="preserve">Munin 2.1.10-227-g0b2bdcd</text></svg></div>
<div class="abs" style="left:231px;top:559px;font-size:15px;color:#555;transform:scaleX(.925);transform-origin:0 0">CPU usage</div>
<div class="gbox" style="left:230px;top:586px"><svg width="499" height="300" viewBox="0 0 499 300" style="display:block" font-family='"Liberation Mono", monospace'><rect x="0" y="0" width="499" height="300" fill="#d5d5d5"/><rect x="1" y="1" width="497" height="298" fill="#fff"/><rect x="2" y="2" width="495" height="296" fill="#f0f0f0"/><rect x="67" y="30" width="400" height="175" fill="#fff"/><rect x="67" y="66" width="398" height="139" fill="#ffcc00"/><rect x="71.0" y="66" width="3.0" height="1" fill="#3a1a70" opacity=".6"/><rect x="84.0" y="66" width="10.0" height="1" fill="#3a1a70" opacity=".6"/><rect x="102.6" y="66" width="2.9" height="1" fill="#3a1a70" opacity=".6"/><rect x="111.0" y="66" width="4.0" height="1" fill="#3a1a70" opacity=".6"/><rect x="142.0" y="66" width="6.0" height="1" fill="#3a1a70" opacity=".6"/><rect x="151.5" y="66" width="6.5" height="1" fill="#3a1a70" opacity=".6"/><rect x="161.0" y="66" width="4.0" height="1" fill="#3a1a70" opacity=".6"/><rect x="169.0" y="66" width="3.0" height="1" fill="#3a1a70" opacity=".6"/><rect x="178.0" y="66" width="3.0" height="1" fill="#3a1a70" opacity=".6"/><rect x="185.0" y="66" width="3.0" height="1" fill="#3a1a70" opacity=".6"/><rect x="194.0" y="66" width="3.6" height="1" fill="#3a1a70" opacity=".6"/><rect x="201.5" y="66" width="5.5" height="1" fill="#3a1a70" opacity=".6"/><rect x="213.0" y="66" width="4.0" height="1" fill="#3a1a70" opacity=".6"/><rect x="224.5" y="66" width="3.5" height="1" fill="#3a1a70" opacity=".6"/><rect x="236.0" y="66" width="9.6" height="1" fill="#3a1a70" opacity=".6"/><rect x="254.0" y="66" width="3.0" height="1" fill="#3a1a70" opacity=".6"/><rect x="240.0" y="66" width="4.0" height="1" fill="#3a1a70" opacity=".6"/><rect x="287.0" y="66" width="3.0" height="1" fill="#3a1a70" opacity=".6"/><rect x="294.0" y="66" width="3.6" height="1" fill="#3a1a70" opacity=".6"/><rect x="303.0" y="66" width="3.0" height="1" fill="#3a1a70" opacity=".6"/><rect x="310.0" y="66" width="3.0" height="1" fill="#3a1a70" opacity=".6"/><rect x="318.7" y="66" width="5.8" height="1" fill="#3a1a70" opacity=".6"/><rect x="330.0" y="66" width="6.0" height="1" fill="#3a1a70" opacity=".6"/><rect x="340.0" y="66" width="4.6" height="1" fill="#3a1a70" opacity=".6"/><rect x="350.0" y="66" width="5.0" height="1" fill="#3a1a70" opacity=".6"/><rect x="359.0" y="66" width="4.0" height="1" fill="#3a1a70" opacity=".6"/><rect x="367.6" y="66" width="4.4" height="1" fill="#3a1a70" opacity=".6"/><rect x="404.0" y="66" width="3.0" height="1" fill="#3a1a70" opacity=".6"/><rect x="415.6" y="66" width="3.9" height="1" fill="#3a1a70" opacity=".6"/><rect x="438.6" y="66" width="4.9" height="1" fill="#3a1a70" opacity=".6"/><rect x="447.0" y="66" width="3.0" height="1" fill="#3a1a70" opacity=".6"/><rect x="453.0" y="66" width="4.0" height="1" fill="#3a1a70" opacity=".6"/><rect x="462.7" y="66" width="2.8" height="1" fill="#3a1a70" opacity=".6"/><path d="M259,65 L261,69 L263,65 Z" fill="#b0d030"/><path d="M67.0,203.0 L85.0,203.0 L86.0,200.0 L88.0,199.0 L92.0,200.0 L95.0,200.0 L99.0,201.0 L100.0,203.0 L104.0,203.0 L105.0,195.0 L107.0,198.0 L109.0,196.0 L112.0,191.0 L114.0,197.0 L115.0,192.0 L117.0,198.0 L119.0,194.0 L121.0,199.0 L122.0,203.0 L141.0,203.0 L142.0,196.0 L143.0,200.0 L157.0,200.0 L158.0,194.0 L159.0,200.0 L161.0,200.0 L162.0,203.0 L166.0,203.0 L167.0,199.0 L169.0,197.0 L171.0,198.0 L173.0,195.0 L175.0,198.0 L177.0,203.0 L189.0,203.0 L190.0,200.0 L192.0,194.0 L194.0,191.0 L196.0,195.0 L198.0,188.0 L200.0,192.0 L202.0,195.0 L205.0,197.0 L207.0,191.0 L209.0,196.0 L211.0,199.0 L213.0,196.0 L215.0,191.0 L217.0,197.0 L219.0,196.0 L221.0,199.0 L223.0,195.0 L226.0,187.0 L228.0,192.0 L230.0,195.0 L232.0,194.0 L235.0,196.0 L238.0,195.0 L247.0,195.0 L248.0,203.0 L260.0,203.0 L261.0,198.0 L262.0,203.0 L377.0,203.0 L378.0,198.0 L379.0,203.0 L381.0,203.0 L382.0,200.0 L385.0,199.0 L388.0,196.0 L390.0,199.0 L393.0,198.0 L395.0,200.0 L397.0,200.0 L398.0,203.0 L401.0,203.0 L402.0,200.0 L406.0,200.0 L409.0,198.0 L411.0,196.0 L413.0,200.0 L416.0,199.0 L419.0,200.0 L422.0,200.0 L425.0,201.0 L427.0,203.0 L434.0,203.0 L435.0,195.0 L438.0,194.0 L441.0,195.0 L447.0,195.0 L449.0,198.0 L458.0,198.0 L459.0,203.0 L466.0,203.0 L466.0,205 L67.0,205 Z" fill="#0066b3"/><path d="M67.0,204.4 L190.0,204.4 L191.0,203.5 L247.0,203.5 L248.0,204.4 L434.0,204.4 L435.0,203.3 L447.0,203.3 L448.0,204.4 L466.0,204.4 L466.0,205 L67.0,205 Z" fill="#00cc00"/><line x1="64" y1="198.5" x2="467" y2="198.5" stroke="rgba(150,150,150,0.42)" stroke-dasharray="1,1"/><line x1="64" y1="191.5" x2="467" y2="191.5" stroke="rgba(150,150,150,0.42)" stroke-dasharray="1,1"/><line x1="64" y1="184.5" x2="467" y2="184.5" stroke="rgba(150,150,150,0.42)" stroke-dasharray="1,1"/><line x1="64" y1="177.5" x2="467" y2="177.5" stroke="rgba(150,150,150,0.42)" stroke-dasharray="1,1"/><line x1="64" y1="163.5" x2="467" y2="163.5" stroke="rgba(150,150,150,0.42)" stroke-dasharray="1,1"/><line x1="64" y1="156.5" x2="467" y2="156.5" stroke="rgba(150,150,150,0.42)" stroke-dasharray="1,1"/><line x1="64" y1="149.5" x2="467" y2="149.5" stroke="rgba(150,150,150,0.42)" stroke-dasharray="1,1"/><line x1="64" y1="142.5" x2="467" y2="142.5" stroke="rgba(150,150,150,0.42)" stroke-dasharray="1,1"/><line x1="64" y1="128.5" x2="467" y2="128.5" stroke="rgba(150,150,150,0.42)" stroke-dasharray="1,1"/><line x1="64" y1="121.5" x2="467" y2="121.5" stroke="rgba(150,150,150,0.42)" stroke-dasharray="1,1"/><line x1="64" y1="114.5" x2="467" y2="114.5" stroke="rgba(150,150,150,0.42)" stroke-dasharray="1,1"/><line x1="64" y1="107.5" x2="467" y2="107.5" stroke="rgba(150,150,150,0.42)" stroke-dasharray="1,1"/><line x1="64" y1="93.5" x2="467" y2="93.5" stroke="rgba(150,150,150,0.42)" stroke-dasharray="1,1"/><line x1="64" y1="86.5" x2="467" y2="86.5" stroke="rgba(150,150,150,0.42)" stroke-dasharray="1,1"/><line x1="64" y1="79.5" x2="467" y2="79.5" stroke="rgba(150,150,150,0.42)" stroke-dasharray="1,1"/><line x1="64" y1="72.5" x2="467" y2="72.5" stroke="rgba(150,150,150,0.42)" stroke-dasharray="1,1"/><line x1="64" y1="58.5" x2="467" y2="58.5" stroke="rgba(150,150,150,0.42)" stroke-dasharray="1,1"/><line x1="64" y1="51.5" x2="467" y2="51.5" stroke="rgba(150,150,150,0.42)" stroke-dasharray="1,1"/><line x1="64" y1="44.5" x2="467" y2="44.5" stroke="rgba(150,150,150,0.42)" stroke-dasharray="1,1"/><line x1="64" y1="37.5" x2="467" y2="37.5" stroke="rgba(150,150,150,0.42)" stroke-dasharray="1,1"/><line x1="67.5" y1="27" x2="67.5" y2="208" stroke="rgba(150,150,150,0.42)" stroke-dasharray="1,1"/><line x1="79.5" y1="27" x2="79.5" y2="208" stroke="rgba(150,150,150,0.42)" stroke-dasharray="1,1"/><line x1="91.5" y1="27" x2="91.5" y2="208" stroke="rgba(150,150,150,0.42)" stroke-dasharray="1,1"/><line x1="103.5" y1="27" x2="103.5" y2="208" stroke="rgba(150,150,150,0.42)" stroke-dasharray="1,1"/><line x1="115.5" y1="27" x2="115.5" y2="208" stroke="rgba(150,150,150,0.42)" stroke-dasharray="1,1"/><line x1="127.5" y1="27" x2="127.5" y2="208" stroke="rgba(150,150,150,0.42)" stroke-dasharray="1,1"/><line x1="139.5" y1="27" x2="139.5" y2="208" stroke="rgba(150,150,150,0.42)" stroke-dasharray="1,1"/><line x1="151.5" y1="27" x2="151.5" y2="208" stroke="rgba(150,150,150,0.42)" stroke-dasharray="1,1"/><line x1="163.5" y1="27" x2="163.5" y2="208" stroke="rgba(150,150,150,0.42)" stroke-dasharray="1,1"/><line x1="175.5" y1="27" x2="175.5" y2="208" stroke="rgba(150,150,150,0.42)" stroke-dasharray="1,1"/><line x1="187.5" y1="27" x2="187.5" y2="208" stroke="rgba(150,150,150,0.42)" stroke-dasharray="1,1"/><line x1="199.5" y1="27" x2="199.5" y2="208" stroke="rgba(150,150,150,0.42)" stroke-dasharray="1,1"/><line x1="211.5" y1="27" x2="211.5" y2="208" stroke="rgba(150,150,150,0.42)" stroke-dasharray="1,1"/><line x1="223.5" y1="27" x2="223.5" y2="208" stroke="rgba(150,150,150,0.42)" stroke-dasharray="1,1"/><line x1="235.5" y1="27" x2="235.5" y2="208" stroke="rgba(150,150,150,0.42)" stroke-dasharray="1,1"/><line x1="247.5" y1="27" x2="247.5" y2="208" stroke="rgba(150,150,150,0.42)" stroke-dasharray="1,1"/><line x1="259.5" y1="27" x2="259.5" y2="208" stroke="rgba(150,150,150,0.42)" stroke-dasharray="1,1"/><line x1="271.5" y1="27" x2="271.5" y2="208" stroke="rgba(150,150,150,0.42)" stroke-dasharray="1,1"/><line x1="283.5" y1="27" x2="283.5" y2="208" stroke="rgba(150,150,150,0.42)" stroke-dasharray="1,1"/><line x1="295.5" y1="27" x2="295.5" y2="208" stroke="rgba(150,150,150,0.42)" stroke-dasharray="1,1"/><line x1="307.5" y1="27" x2="307.5" y2="208" stroke="rgba(150,150,150,0.42)" stroke-dasharray="1,1"/><line x1="319.5" y1="27" x2="319.5" y2="208" stroke="rgba(150,150,150,0.42)" stroke-dasharray="1,1"/><line x1="331.5" y1="27" x2="331.5" y2="208" stroke="rgba(150,150,150,0.42)" stroke-dasharray="1,1"/><line x1="343.5" y1="27" x2="343.5" y2="208" stroke="rgba(150,150,150,0.42)" stroke-dasharray="1,1"/><line x1="355.5" y1="27" x2="355.5" y2="208" stroke="rgba(150,150,150,0.42)" stroke-dasharray="1,1"/><line x1="367.5" y1="27" x2="367.5" y2="208" stroke="rgba(150,150,150,0.42)" stroke-dasharray="1,1"/><line x1="379.5" y1="27" x2="379.5" y2="208" stroke="rgba(150,150,150,0.42)" stroke-dasharray="1,1"/><line x1="391.5" y1="27" x2="391.5" y2="208" stroke="rgba(150,150,150,0.42)" stroke-dasharray="1,1"/><line x1="403.5" y1="27" x2="403.5" y2="208" stroke="rgba(150,150,150,0.42)" stroke-dasharray="1,1"/><line x1="415.5" y1="27" x2="415.5" y2="208" stroke="rgba(150,150,150,0.42)" stroke-dasharray="1,1"/><line x1="427.5" y1="27" x2="427.5" y2="208" stroke="rgba(150,150,150,0.42)" stroke-dasharray="1,1"/><line x1="439.5" y1="27" x2="439.5" y2="208" stroke="rgba(150,150,150,0.42)" stroke-dasharray="1,1"/><line x1="451.5" y1="27" x2="451.5" y2="208" stroke="rgba(150,150,150,0.42)" stroke-dasharray="1,1"/><line x1="463.5" y1="27" x2="463.5" y2="208" stroke="rgba(150,150,150,0.42)" stroke-dasharray="1,1"/><line x1="115.5" y1="27" x2="115.5" y2="209" stroke="rgba(255,0,0,0.3)" stroke-dasharray="1,1"/><line x1="187.5" y1="27" x2="187.5" y2="209" stroke="rgba(255,0,0,0.3)" stroke-dasharray="1,1"/><line x1="259.5" y1="27" x2="259.5" y2="209" stroke="rgba(255,0,0,0.3)" stroke-dasharray="1,1"/><line x1="331.5" y1="27" x2="331.5" y2="209" stroke="rgba(255,0,0,0.3)" stroke-dasharray="1,1"/><line x1="403.5" y1="27" x2="403.5" y2="209" stroke="rgba(255,0,0,0.3)" stroke-dasharray="1,1"/><line x1="63" y1="205.5" x2="469" y2="205.5" stroke="rgba(255,0,0,0.3)" stroke-dasharray="1,1"/><line x1="63" y1="170.5" x2="469" y2="170.5" stroke="rgba(255,0,0,0.3)" stroke-dasharray="1,1"/><line x1="63" y1="135.5" x2="469" y2="135.5" stroke="rgba(255,0,0,0.3)" stroke-dasharray="1,1"/><line x1="63" y1="100.5" x2="469" y2="100.5" stroke="rgba(255,0,0,0.3)" stroke-dasharray="1,1"/><line x1="63" y1="65.5" x2="469" y2="65.5" stroke="rgba(255,0,0,0.3)" stroke-dasharray="1,1"/><line x1="63" y1="30.5" x2="469" y2="30.5" stroke="rgba(255,0,0,0.3)" stroke-dasharray="1,1"/><line x1="465.5" y1="35" x2="465.5" y2="205" stroke="#666" stroke-dasharray="2,5" stroke-width="1"/><line x1="66.5" y1="27" x2="66.5" y2="208" stroke="#cdd1f6"/><line x1="63" y1="205.5" x2="470" y2="205.5" stroke="#cdd1f6"/><path d="M63.5,28.2 L66.5,23.1 L69.5,28.2 Z" fill="#cdd1f6"/><path d="M469,202.5 L474,205.5 L469,208.5 Z" fill="#cdd1f6"/><text x="61" y="209" text-anchor="end" fill="#555" font-size="10"  xml:space="preserve">0</text><text x="61" y="174" text-anchor="end" fill="#555" font-size="10" textLength="18" lengthAdjust="spacingAndGlyphs"  xml:space="preserve">100</text><text x="61" y="139" text-anchor="end" fill="#555" font-size="10" textLength="18" lengthAdjust="spacingAndGlyphs"  xml:space="preserve">200</text><text x="61" y="104" text-anchor="end" fill="#555" font-size="10" textLength="18" lengthAdjust="spacingAndGlyphs"  xml:space="preserve">300</text><text x="61" y="69" text-anchor="end" fill="#555" font-size="10" textLength="18" lengthAdjust="spacingAndGlyphs"  xml:space="preserve">400</text><text x="61" y="34" text-anchor="end" fill="#555" font-size="10" textLength="18" lengthAdjust="spacingAndGlyphs"  xml:space="preserve">500</text><text x="115.5" y="217" text-anchor="middle" fill="#555" font-size="10" textLength="60" lengthAdjust="spacingAndGlyphs"  xml:space="preserve">ven. 12:00</text><text x="259.5" y="217" text-anchor="middle" fill="#555" font-size="10" textLength="60" lengthAdjust="spacingAndGlyphs"  xml:space="preserve">sam. 00:00</text><text x="403.5" y="217" text-anchor="middle" fill="#555" font-size="10" textLength="60" lengthAdjust="spacingAndGlyphs"  xml:space="preserve">sam. 12:00</text><text x="249.5" y="17" text-anchor="middle" fill="#5a5a5a" font-family='"Liberation Sans", sans-serif' font-size="10.6" textLength="99" lengthAdjust="spacingAndGlyphs">CPU usage - by day</text><g fill="none" stroke="#555"><circle cx="10.7" cy="118.3" r="1.4" stroke-width="1.1"/><circle cx="14.6" cy="115.3" r="1.4" stroke-width="1.1"/><line x1="11.6" y1="113.6" x2="13.8" y2="119.6" stroke-width=".9"/></g><text transform="translate(483.5,7.5) rotate(90)" fill="#c0c0c0" font-size="10" textLength="132" lengthAdjust="spacingAndGlyphs" xml:space="preserve">RRDTOOL / TOBI OETIKER</text><text x="225.8" y="234" text-anchor="start" fill="#4a4a4a" font-size="10" textLength="18" lengthAdjust="spacingAndGlyphs"  xml:space="preserve">Cur</text><text x="293.7" y="234" text-anchor="start" fill="#4a4a4a" font-size="10" textLength="18" lengthAdjust="spacingAndGlyphs"  xml:space="preserve">Min</text><text x="361.9" y="234" text-anchor="start" fill="#4a4a4a" font-size="10" textLength="18" lengthAdjust="spacingAndGlyphs"  xml:space="preserve">Avg</text><text x="430" y="234" text-anchor="start" fill="#4a4a4a" font-size="10" textLength="18" lengthAdjust="spacingAndGlyphs"  xml:space="preserve">Max</text><rect x="16" y="239.5" width="6" height="6" fill="#00cc00"/><text x="28.7" y="246" text-anchor="start" fill="#4a4a4a" font-size="10" textLength="36" lengthAdjust="spacingAndGlyphs"  xml:space="preserve">system</text><text x="225.8" y="246" text-anchor="start" fill="#4a4a4a" font-size="10" textLength="36" lengthAdjust="spacingAndGlyphs"  xml:space="preserve">  1.19</text><text x="293.8" y="246" text-anchor="start" fill="#4a4a4a" font-size="10" textLength="42" lengthAdjust="spacingAndGlyphs"  xml:space="preserve">853.83m</text><text x="361.8" y="246" text-anchor="start" fill="#4a4a4a" font-size="10" textLength="36" lengthAdjust="spacingAndGlyphs"  xml:space="preserve">  2.55</text><text x="429.8" y="246" text-anchor="start" fill="#4a4a4a" font-size="10" textLength="36" lengthAdjust="spacingAndGlyphs"  xml:space="preserve">  7.42</text><rect x="16" y="250.5" width="6" height="6" fill="#0066b3"/><text x="28.7" y="257" text-anchor="start" fill="#4a4a4a" font-size="10" textLength="24" lengthAdjust="spacingAndGlyphs"  xml:space="preserve">user</text><text x="225.8" y="257" text-anchor="start" fill="#4a4a4a" font-size="10" textLength="36" lengthAdjust="spacingAndGlyphs"  xml:space="preserve">  3.40</text><text x="293.8" y="257" text-anchor="start" fill="#4a4a4a" font-size="10" textLength="36" lengthAdjust="spacingAndGlyphs"  xml:space="preserve">  2.41</text><text x="361.8" y="257" text-anchor="start" fill="#4a4a4a" font-size="10" textLength="36" lengthAdjust="spacingAndGlyphs"  xml:space="preserve"> 11.63</text><text x="429.8" y="257" text-anchor="start" fill="#4a4a4a" font-size="10" textLength="36" lengthAdjust="spacingAndGlyphs"  xml:space="preserve"> 46.57</text><rect x="16" y="261.5" width="6" height="6" fill="#ff8000"/><text x="28.7" y="268" text-anchor="start" fill="#4a4a4a" font-size="10" textLength="24" lengthAdjust="spacingAndGlyphs"  xml:space="preserve">nice</text><text x="225.8" y="268" text-anchor="start" fill="#4a4a4a" font-size="10" textLength="36" lengthAdjust="spacingAndGlyphs"  xml:space="preserve">  0.00</text><text x="293.8" y="268" text-anchor="start" fill="#4a4a4a" font-size="10" textLength="36" lengthAdjust="spacingAndGlyphs"  xml:space="preserve">  0.00</text><text x="361.8" y="268" text-anchor="start" fill="#4a4a4a" font-size="10" textLength="36" lengthAdjust="spacingAndGlyphs"  xml:space="preserve">  0.00</text><text x="429.8" y="268" text-anchor="start" fill="#4a4a4a" font-size="10" textLength="36" lengthAdjust="spacingAndGlyphs"  xml:space="preserve">  0.00</text><rect x="16" y="272.5" width="6" height="6" fill="#ffcc00"/><text x="28.7" y="279" text-anchor="start" fill="#4a4a4a" font-size="10" textLength="24" lengthAdjust="spacingAndGlyphs"  xml:space="preserve">idle</text><text x="225.8" y="279" text-anchor="start" fill="#4a4a4a" font-size="10" textLength="36" lengthAdjust="spacingAndGlyphs"  xml:space="preserve">393.60</text><text x="293.8" y="279" text-anchor="start" fill="#4a4a4a" font-size="10" textLength="36" lengthAdjust="spacingAndGlyphs"  xml:space="preserve">343.76</text><text x="361.8" y="279" text-anchor="start" fill="#4a4a4a" font-size="10" textLength="36" lengthAdjust="spacingAndGlyphs"  xml:space="preserve">384.15</text><text x="429.8" y="279" text-anchor="start" fill="#4a4a4a" font-size="10" textLength="36" lengthAdjust="spacingAndGlyphs"  xml:space="preserve">396.20</text></svg></div>
<div class="gbox" style="left:735px;top:586px"><svg width="499" height="300" viewBox="0 0 499 300" style="display:block" font-family='"Liberation Mono", monospace'><rect x="0" y="0" width="499" height="300" fill="#d5d5d5"/><rect x="1" y="1" width="497" height="298" fill="#fff"/><rect x="2" y="2" width="495" height="296" fill="#f0f0f0"/><rect x="67" y="30" width="400" height="175" fill="#fff"/><rect x="67" y="31" width="398" height="174" fill="#ffcc00"/><rect x="66.8" y="31" width="12.7" height="1" fill="#2a0a8a" opacity=".85"/><rect x="87.8" y="31" width="6.0" height="1" fill="#2a0a8a" opacity=".85"/><rect x="96.0" y="31" width="1.5" height="1" fill="#2a0a8a" opacity=".85"/><rect x="102.0" y="31" width="3.0" height="1" fill="#2a0a8a" opacity=".85"/><rect x="109.5" y="31" width="2.3" height="1" fill="#2a0a8a" opacity=".85"/><rect x="114.0" y="31" width="2.3" height="1" fill="#2a0a8a" opacity=".85"/><rect x="128.3" y="31" width="13.5" height="1" fill="#2a0a8a" opacity=".85"/><rect x="147.0" y="31" width="1.6" height="1" fill="#2a0a8a" opacity=".85"/><rect x="150.8" y="31" width="5.2" height="1" fill="#2a0a8a" opacity=".85"/><rect x="157.6" y="31" width="21.0" height="1" fill="#2a0a8a" opacity=".85"/><rect x="192.0" y="31" width="2.4" height="1" fill="#2a0a8a" opacity=".85"/><rect x="197.4" y="31" width="2.2" height="1" fill="#2a0a8a" opacity=".85"/><rect x="202.0" y="31" width="2.0" height="1" fill="#2a0a8a" opacity=".85"/><rect x="219.0" y="31" width="4.6" height="1" fill="#2a0a8a" opacity=".85"/><rect x="224.4" y="31" width="5.3" height="1" fill="#2a0a8a" opacity=".85"/><rect x="232.7" y="31" width="6.0" height="1" fill="#2a0a8a" opacity=".85"/><rect x="240.2" y="31" width="7.5" height="1" fill="#2a0a8a" opacity=".85"/><rect x="249.3" y="31" width="20.3" height="1" fill="#2a0a8a" opacity=".85"/><rect x="278.0" y="31" width="2.4" height="1" fill="#2a0a8a" opacity=".85"/><rect x="283.5" y="31" width="3.0" height="1" fill="#2a0a8a" opacity=".85"/><rect x="289.6" y="31" width="2.4" height="1" fill="#2a0a8a" opacity=".85"/><rect x="297.3" y="31" width="12.3" height="1" fill="#2a0a8a" opacity=".85"/><rect x="314.0" y="31" width="1.8" height="1" fill="#2a0a8a" opacity=".85"/><rect x="321.0" y="31" width="2.5" height="1" fill="#2a0a8a" opacity=".85"/><rect x="325.8" y="31" width="3.8" height="1" fill="#2a0a8a" opacity=".85"/><rect x="359.6" y="31" width="1.4" height="1" fill="#2a0a8a" opacity=".85"/><rect x="365.0" y="31" width="1.5" height="1" fill="#2a0a8a" opacity=".85"/><rect x="368.8" y="31" width="2.2" height="1" fill="#2a0a8a" opacity=".85"/><rect x="382.0" y="31" width="2.0" height="1" fill="#2a0a8a" opacity=".85"/><rect x="406.5" y="31" width="2.5" height="1" fill="#2a0a8a" opacity=".85"/><rect x="414.0" y="31" width="2.5" height="1" fill="#2a0a8a" opacity=".85"/><rect x="422.0" y="31" width="8.4" height="1" fill="#2a0a8a" opacity=".85"/><rect x="462.0" y="31" width="3.0" height="1" fill="#2a0a8a" opacity=".85"/><rect x="81.0" y="31" width="6.0" height="1" fill="#ccee22"/><rect x="180.0" y="31" width="9.0" height="1" fill="#ccee22"/><rect x="204.0" y="31" width="4.7" height="1" fill="#ccee22"/><rect x="229.7" y="31" width="3.0" height="1" fill="#ccee22"/><rect x="286.5" y="31" width="3.1" height="1" fill="#ccee22"/><rect x="292.0" y="31" width="4.5" height="1" fill="#ccee22"/><path d="M67.0,202.5 L95.0,202.5 L96.0,200.0 L98.0,202.5 L143.0,202.5 L144.0,200.0 L146.0,202.5 L191.0,202.5 L192.0,200.0 L194.0,202.5 L239.0,202.5 L240.0,200.0 L242.0,202.5 L287.0,202.5 L288.0,200.0 L290.0,202.5 L318.0,202.5 L319.0,200.0 L322.0,200.0 L324.0,198.0 L326.0,195.0 L328.0,191.0 L330.0,195.0 L332.0,198.0 L334.0,202.3 L336.0,200.0 L338.0,202.8 L353.0,202.8 L354.0,199.0 L356.0,197.0 L358.0,200.0 L360.0,198.0 L362.0,202.8 L364.0,202.8 L365.0,198.0 L367.0,196.0 L369.0,197.0 L371.0,196.0 L372.0,202.8 L374.0,202.8 L375.0,199.0 L377.0,198.0 L379.0,196.0 L381.0,198.0 L383.0,202.8 L385.0,202.3 L387.0,202.8 L400.0,202.8 L401.0,200.0 L403.0,198.0 L407.0,193.0 L409.0,197.0 L410.0,202.8 L411.0,202.8 L412.0,199.0 L414.0,198.0 L416.0,197.0 L418.0,198.0 L419.0,202.8 L420.0,202.8 L421.0,195.0 L423.0,191.0 L425.0,194.0 L427.0,190.0 L429.0,193.0 L430.0,202.8 L432.0,200.0 L433.0,202.8 L450.0,202.8 L451.0,200.0 L453.0,198.0 L455.0,199.0 L457.0,198.0 L458.0,202.8 L461.0,202.8 L462.0,196.0 L463.0,193.0 L465.0,195.0 L466.0,202.8 L466.0,205 L67.0,205 Z" fill="#0066b3"/><path d="M67.0,204.3 L323.0,204.3 L325.0,203.4 L331.0,203.4 L333.0,204.3 L420.0,204.3 L421.0,203.3 L430.0,203.3 L431.0,204.3 L466.0,204.3 L466.0,205 L67.0,205 Z" fill="#00cc00"/><line x1="64" y1="196.5" x2="467" y2="196.5" stroke="rgba(150,150,150,0.42)" stroke-dasharray="1,1"/><line x1="64" y1="187.5" x2="467" y2="187.5" stroke="rgba(150,150,150,0.42)" stroke-dasharray="1,1"/><line x1="64" y1="179.5" x2="467" y2="179.5" stroke="rgba(150,150,150,0.42)" stroke-dasharray="1,1"/><line x1="64" y1="170.5" x2="467" y2="170.5" stroke="rgba(150,150,150,0.42)" stroke-dasharray="1,1"/><line x1="64" y1="152.5" x2="467" y2="152.5" stroke="rgba(150,150,150,0.42)" stroke-dasharray="1,1"/><line x1="64" y1="144.5" x2="467" y2="144.5" stroke="rgba(150,150,150,0.42)" stroke-dasharray="1,1"/><line x1="64" y1="135.5" x2="467" y2="135.5" stroke="rgba(150,150,150,0.42)" stroke-dasharray="1,1"/><line x1="64" y1="126.5" x2="467" y2="126.5" stroke="rgba(150,150,150,0.42)" stroke-dasharray="1,1"/><line x1="64" y1="109.5" x2="467" y2="109.5" stroke="rgba(150,150,150,0.42)" stroke-dasharray="1,1"/><line x1="64" y1="100.5" x2="467" y2="100.5" stroke="rgba(150,150,150,0.42)" stroke-dasharray="1,1"/><line x1="64" y1="91.5" x2="467" y2="91.5" stroke="rgba(150,150,150,0.42)" stroke-dasharray="1,1"/><line x1="64" y1="83.5" x2="467" y2="83.5" stroke="rgba(150,150,150,0.42)" stroke-dasharray="1,1"/><line x1="64" y1="65.5" x2="467" y2="65.5" stroke="rgba(150,150,150,0.42)" stroke-dasharray="1,1"/><line x1="64" y1="56.5" x2="467" y2="56.5" stroke="rgba(150,150,150,0.42)" stroke-dasharray="1,1"/><line x1="64" y1="47.5" x2="467" y2="47.5" stroke="rgba(150,150,150,0.42)" stroke-dasharray="1,1"/><line x1="64" y1="39.5" x2="467" y2="39.5" stroke="rgba(150,150,150,0.42)" stroke-dasharray="1,1"/><line x1="71.5" y1="27" x2="71.5" y2="208" stroke="rgba(150,150,150,0.42)" stroke-dasharray="1,1"/><line x1="95.5" y1="27" x2="95.5" y2="208" stroke="rgba(150,150,150,0.42)" stroke-dasharray="1,1"/><line x1="119.5" y1="27" x2="119.5" y2="208" stroke="rgba(150,150,150,0.42)" stroke-dasharray="1,1"/><line x1="143.5" y1="27" x2="143.5" y2="208" stroke="rgba(150,150,150,0.42)" stroke-dasharray="1,1"/><line x1="167.5" y1="27" x2="167.5" y2="208" stroke="rgba(150,150,150,0.42)" stroke-dasharray="1,1"/><line x1="191.5" y1="27" x2="191.5" y2="208" stroke="rgba(150,150,150,0.42)" stroke-dasharray="1,1"/><line x1="215.5" y1="27" x2="215.5" y2="208" stroke="rgba(150,150,150,0.42)" stroke-dasharray="1,1"/><line x1="239.5" y1="27" x2="239.5" y2="208" stroke="rgba(150,150,150,0.42)" stroke-dasharray="1,1"/><line x1="263.5" y1="27" x2="263.5" y2="208" stroke="rgba(150,150,150,0.42)" stroke-dasharray="1,1"/><line x1="287.5" y1="27" x2="287.5" y2="208" stroke="rgba(150,150,150,0.42)" stroke-dasharray="1,1"/><line x1="311.5" y1="27" x2="311.5" y2="208" stroke="rgba(150,150,150,0.42)" stroke-dasharray="1,1"/><line x1="335.5" y1="27" x2="335.5" y2="208" stroke="rgba(150,150,150,0.42)" stroke-dasharray="1,1"/><line x1="359.5" y1="27" x2="359.5" y2="208" stroke="rgba(150,150,150,0.42)" stroke-dasharray="1,1"/><line x1="383.5" y1="27" x2="383.5" y2="208" stroke="rgba(150,150,150,0.42)" stroke-dasharray="1,1"/><line x1="407.5" y1="27" x2="407.5" y2="208" stroke="rgba(150,150,150,0.42)" stroke-dasharray="1,1"/><line x1="431.5" y1="27" x2="431.5" y2="208" stroke="rgba(150,150,150,0.42)" stroke-dasharray="1,1"/><line x1="455.5" y1="27" x2="455.5" y2="208" stroke="rgba(150,150,150,0.42)" stroke-dasharray="1,1"/><line x1="95.5" y1="27" x2="95.5" y2="209" stroke="rgba(255,0,0,0.3)" stroke-dasharray="1,1"/><line x1="143.5" y1="27" x2="143.5" y2="209" stroke="rgba(255,0,0,0.3)" stroke-dasharray="1,1"/><line x1="191.5" y1="27" x2="191.5" y2="209" stroke="rgba(255,0,0,0.3)" stroke-dasharray="1,1"/><line x1="239.5" y1="27" x2="239.5" y2="209" stroke="rgba(255,0,0,0.3)" stroke-dasharray="1,1"/><line x1="287.5" y1="27" x2="287.5" y2="209" stroke="rgba(255,0,0,0.3)" stroke-dasharray="1,1"/><line x1="335.5" y1="27" x2="335.5" y2="209" stroke="rgba(255,0,0,0.3)" stroke-dasharray="1,1"/><line x1="383.5" y1="27" x2="383.5" y2="209" stroke="rgba(255,0,0,0.3)" stroke-dasharray="1,1"/><line x1="431.5" y1="27" x2="431.5" y2="209" stroke="rgba(255,0,0,0.3)" stroke-dasharray="1,1"/><line x1="63" y1="205.5" x2="469" y2="205.5" stroke="rgba(255,0,0,0.3)" stroke-dasharray="1,1"/><line x1="63" y1="161.5" x2="469" y2="161.5" stroke="rgba(255,0,0,0.3)" stroke-dasharray="1,1"/><line x1="63" y1="117.5" x2="469" y2="117.5" stroke="rgba(255,0,0,0.3)" stroke-dasharray="1,1"/><line x1="63" y1="74.5" x2="469" y2="74.5" stroke="rgba(255,0,0,0.3)" stroke-dasharray="1,1"/><line x1="63" y1="30.5" x2="469" y2="30.5" stroke="rgba(255,0,0,0.3)" stroke-dasharray="1,1"/><line x1="465.5" y1="35" x2="465.5" y2="205" stroke="#666" stroke-dasharray="2,5" stroke-width="1"/><line x1="66.5" y1="27" x2="66.5" y2="208" stroke="#cdd1f6"/><line x1="63" y1="205.5" x2="470" y2="205.5" stroke="#cdd1f6"/><path d="M63.5,28.2 L66.5,23.1 L69.5,28.2 Z" fill="#cdd1f6"/><path d="M469,202.5 L474,205.5 L469,208.5 Z" fill="#cdd1f6"/><text x="61" y="165" text-anchor="end" fill="#555" font-size="10" textLength="18" lengthAdjust="spacingAndGlyphs"  xml:space="preserve">100</text><text x="61" y="121" text-anchor="end" fill="#555" font-size="10" textLength="18" lengthAdjust="spacingAndGlyphs"  xml:space="preserve">200</text><text x="61" y="78" text-anchor="end" fill="#555" font-size="10" textLength="18" lengthAdjust="spacingAndGlyphs"  xml:space="preserve">300</text><text x="61" y="34" text-anchor="end" fill="#555" font-size="10" textLength="18" lengthAdjust="spacingAndGlyphs"  xml:space="preserve">400</text><text x="119.5" y="217" text-anchor="middle" fill="#555" font-size="10" textLength="42" lengthAdjust="spacingAndGlyphs"  xml:space="preserve">sam. 02</text><text x="215.5" y="217" text-anchor="middle" fill="#555" font-size="10" textLength="42" lengthAdjust="spacingAndGlyphs"  xml:space="preserve">lun. 04</text><text x="311.5" y="217" text-anchor="middle" fill="#555" font-size="10" textLength="42" lengthAdjust="spacingAndGlyphs"  xml:space="preserve">mer. 06</text><text x="407.5" y="217" text-anchor="middle" fill="#555" font-size="10" textLength="42" lengthAdjust="spacingAndGlyphs"  xml:space="preserve">ven. 08</text><text x="249.5" y="17" text-anchor="middle" fill="#5a5a5a" font-family='"Liberation Sans", sans-serif' font-size="10.6" textLength="106" lengthAdjust="spacingAndGlyphs">CPU usage - by week</text><g fill="none" stroke="#555"><circle cx="10.7" cy="118.3" r="1.4" stroke-width="1.1"/><circle cx="14.6" cy="115.3" r="1.4" stroke-width="1.1"/><line x1="11.6" y1="113.6" x2="13.8" y2="119.6" stroke-width=".9"/></g><text transform="translate(483.5,7.5) rotate(90)" fill="#c0c0c0" font-size="10" textLength="132" lengthAdjust="spacingAndGlyphs" xml:space="preserve">RRDTOOL / TOBI OETIKER</text><text x="225.8" y="234" text-anchor="start" fill="#4a4a4a" font-size="10" textLength="18" lengthAdjust="spacingAndGlyphs"  xml:space="preserve">Cur</text><text x="293.7" y="234" text-anchor="start" fill="#4a4a4a" font-size="10" textLength="18" lengthAdjust="spacingAndGlyphs"  xml:space="preserve">Min</text><text x="361.9" y="234" text-anchor="start" fill="#4a4a4a" font-size="10" textLength="18" lengthAdjust="spacingAndGlyphs"  xml:space="preserve">Avg</text><text x="430" y="234" text-anchor="start" fill="#4a4a4a" font-size="10" textLength="18" lengthAdjust="spacingAndGlyphs"  xml:space="preserve">Max</text><rect x="16" y="239.5" width="6" height="6" fill="#00cc00"/><text x="28.7" y="246" text-anchor="start" fill="#4a4a4a" font-size="10" textLength="36" lengthAdjust="spacingAndGlyphs"  xml:space="preserve">system</text><text x="225.8" y="246" text-anchor="start" fill="#4a4a4a" font-size="10" textLength="36" lengthAdjust="spacingAndGlyphs"  xml:space="preserve">  1.60</text><text x="293.8" y="246" text-anchor="start" fill="#4a4a4a" font-size="10" textLength="42" lengthAdjust="spacingAndGlyphs"  xml:space="preserve">833.03m</text><text x="361.8" y="246" text-anchor="start" fill="#4a4a4a" font-size="10" textLength="36" lengthAdjust="spacingAndGlyphs"  xml:space="preserve">  2.00</text><text x="429.8" y="246" text-anchor="start" fill="#4a4a4a" font-size="10" textLength="36" lengthAdjust="spacingAndGlyphs"  xml:space="preserve">  8.69</text><rect x="16" y="250.5" width="6" height="6" fill="#0066b3"/><text x="28.7" y="257" text-anchor="start" fill="#4a4a4a" font-size="10" textLength="24" lengthAdjust="spacingAndGlyphs"  xml:space="preserve">user</text><text x="225.8" y="257" text-anchor="start" fill="#4a4a4a" font-size="10" textLength="36" lengthAdjust="spacingAndGlyphs"  xml:space="preserve">  5.52</text><text x="293.8" y="257" text-anchor="start" fill="#4a4a4a" font-size="10" textLength="36" lengthAdjust="spacingAndGlyphs"  xml:space="preserve">  2.37</text><text x="361.8" y="257" text-anchor="start" fill="#4a4a4a" font-size="10" textLength="36" lengthAdjust="spacingAndGlyphs"  xml:space="preserve">  6.91</text><text x="429.8" y="257" text-anchor="start" fill="#4a4a4a" font-size="10" textLength="36" lengthAdjust="spacingAndGlyphs"  xml:space="preserve"> 49.84</text><rect x="16" y="261.5" width="6" height="6" fill="#ff8000"/><text x="28.7" y="268" text-anchor="start" fill="#4a4a4a" font-size="10" textLength="24" lengthAdjust="spacingAndGlyphs"  xml:space="preserve">nice</text><text x="225.8" y="268" text-anchor="start" fill="#4a4a4a" font-size="10" textLength="36" lengthAdjust="spacingAndGlyphs"  xml:space="preserve">  0.00</text><text x="293.8" y="268" text-anchor="start" fill="#4a4a4a" font-size="10" textLength="36" lengthAdjust="spacingAndGlyphs"  xml:space="preserve">  0.00</text><text x="361.8" y="268" text-anchor="start" fill="#4a4a4a" font-size="10" textLength="36" lengthAdjust="spacingAndGlyphs"  xml:space="preserve">  0.00</text><text x="429.8" y="268" text-anchor="start" fill="#4a4a4a" font-size="10" textLength="36" lengthAdjust="spacingAndGlyphs"  xml:space="preserve">  0.00</text><rect x="16" y="272.5" width="6" height="6" fill="#ffcc00"/><text x="28.7" y="279" text-anchor="start" fill="#4a4a4a" font-size="10" textLength="24" lengthAdjust="spacingAndGlyphs"  xml:space="preserve">idle</text><text x="225.8" y="279" text-anchor="start" fill="#4a4a4a" font-size="10" textLength="36" lengthAdjust="spacingAndGlyphs"  xml:space="preserve">391.40</text><text x="293.8" y="279" text-anchor="start" fill="#4a4a4a" font-size="10" textLength="36" lengthAdjust="spacingAndGlyphs"  xml:space="preserve">338.75</text><text x="361.8" y="279" text-anchor="start" fill="#4a4a4a" font-size="10" textLength="36" lengthAdjust="spacingAndGlyphs"  xml:space="preserve">389.17</text><text x="429.8" y="279" text-anchor="start" fill="#4a4a4a" font-size="10" textLength="36" lengthAdjust="spacingAndGlyphs"  xml:space="preserve">396.20</text></svg></div>
</body></html>
